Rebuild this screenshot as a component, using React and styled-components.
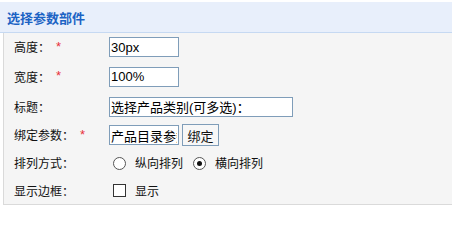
import React from "react";
import styled, { createGlobalStyle } from "styled-components";

const Global = createGlobalStyle`
  html, body { margin: 0; padding: 0; background: #ffffff; }
  body { font-family: "Noto Sans CJK SC", "Liberation Sans", sans-serif; }
  * { box-sizing: border-box; }
`;

const Panel = styled.div`
  padding-top: 2px;
  width: 452px;
`;

const Header = styled.div`
  height: 31px;
  background: #e8effb;
  border-bottom: 1px solid #c6d9f2;
  display: flex;
  align-items: center;
  padding-left: 7px;
  font-family: "Noto Sans CJK SC", sans-serif;
  font-size: 13px;
  font-weight: bold;
  color: #1c63c4;
  line-height: 1;
`;

const Body = styled.div`
  margin-left: 3px;
  background: #f5f5f5;
  border-left: 1px solid #dadada;
  border-bottom: 1px solid #dadada;
  display: flex;
  flex-direction: column;
`;

const Row = styled.div`
  display: grid;
  grid-template-columns: 105px 1fr;
  align-items: center;
  height: ${(p) => p.$h}px;
`;

const Label = styled.div`
  padding-left: 10px;
  font-size: 12px;
  color: #111;
  display: flex;
  align-items: center;
  line-height: 1;
`;

const Star = styled.span`
  color: #e8303a;
  font-family: "Liberation Sans", sans-serif;
  font-size: 13px;
  margin-left: 6px;
  position: relative;
  top: -1px;
`;

const Value = styled.div`
  display: flex;
  align-items: center;
`;

const TextInput = styled.input`
  width: ${(p) => p.$w}px;
  height: 20px;
  border: 1px solid #7f9db9;
  background: #fff;
  padding: 0 1px;
  margin: 0;
  font-family: "Liberation Sans", "Noto Sans CJK SC", sans-serif;
  font-size: 13px;
  color: #000;
  outline: none;
`;

const Button = styled.button`
  margin-left: 3px;
  width: 37px;
  height: 22px;
  border: 1px solid #7f9db9;
  background: #f7f7f7;
  padding: 0;
  font-family: "Noto Sans CJK SC", sans-serif;
  font-size: 13px;
  color: #111;
  line-height: 1;
`;

const Radio = styled.span`
  width: 13px;
  height: 13px;
  border-radius: 50%;
  border: 1px solid #555;
  background: #fff;
  margin-left: ${(p) => p.$ml}px;
  display: inline-flex;
  align-items: center;
  justify-content: center;
  flex: none;
  &::after {
    content: "";
    width: 5px;
    height: 5px;
    border-radius: 50%;
    background: ${(p) => (p.$checked ? "#111" : "transparent")};
  }
`;

const Check = styled.span`
  width: 13px;
  height: 13px;
  border: 1px solid #333;
  background: #fff;
  margin-left: 4px;
  flex: none;
`;

const OptText = styled.span`
  margin-left: 9px;
  font-size: 12px;
  color: #111;
  line-height: 1;
`;

export default function App() {
  return (
    <>
      <Global />
      <Panel>
        <Header>选择参数部件</Header>
        <Body>
          <Row $h={28}>
            <Label>
              高度：<Star>*</Star>
            </Label>
            <Value>
              <TextInput $w={70} defaultValue="30px" />
            </Value>
          </Row>
          <Row $h={31}>
            <Label>
              宽度：<Star>*</Star>
            </Label>
            <Value>
              <TextInput $w={70} defaultValue="100%" />
            </Value>
          </Row>
          <Row $h={29}>
            <Label>标题：</Label>
            <Value>
              <TextInput $w={184} defaultValue="选择产品类别(可多选)：" />
            </Value>
          </Row>
          <Row $h={28}>
            <Label>
              绑定参数：<Star>*</Star>
            </Label>
            <Value>
              <TextInput $w={70} defaultValue="产品目录参数" />
              <Button>绑定</Button>
            </Value>
          </Row>
          <Row $h={28}>
            <Label>排列方式：</Label>
            <Value>
              <Radio $ml={4} />
              <OptText>纵向排列</OptText>
              <Radio $ml={10} $checked />
              <OptText>横向排列</OptText>
            </Value>
          </Row>
          <Row $h={27}>
            <Label>显示边框：</Label>
            <Value>
              <Check />
              <OptText>显示</OptText>
            </Value>
          </Row>
        </Body>
      </Panel>
    </>
  );
}
